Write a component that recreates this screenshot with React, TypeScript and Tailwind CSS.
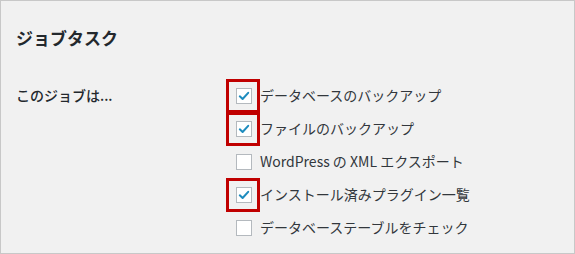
const font = { fontFamily: '"Noto Sans CJK JP", "Noto Sans", sans-serif' };

interface Task {
  label: string;
  checked: boolean;
  marked: boolean;
}

const tasks: Task[] = [
  { label: "データベースのバックアップ", checked: true, marked: true },
  { label: "ファイルのバックアップ", checked: true, marked: true },
  { label: "WordPress の XML エクスポート", checked: false, marked: false },
  { label: "インストール済みプラグイン一覧", checked: true, marked: true },
  { label: "データベーステーブルをチェック", checked: false, marked: false },
];

function Checkbox({ checked, marked }: { checked: boolean; marked: boolean }) {
  return (
    <span className="relative flex h-4 w-4 shrink-0 items-center justify-center">
      <span className="flex h-4 w-4 items-center justify-center border border-[#b4b9be] bg-white">
        {checked && (
          <svg width="14" height="14" viewBox="0 0 16 16" fill="none">
            <path
              d="M3.2 8.4 L6.4 11.4 L12.8 4.4"
              stroke="#1e8cbe"
              strokeWidth="2.3"
              strokeLinecap="round"
              strokeLinejoin="round"
            />
          </svg>
        )}
      </span>
      {/* 赤枠の注釈 */}
      {marked && (
        <span className="pointer-events-none absolute left-[-10px] top-[-9px] h-[34px] w-[34px] border-[3px] border-[#c00000]" />
      )}
    </span>
  );
}

export default function App() {
  return (
    <div
      className="h-[254px] w-[575px] border border-[#c8c8c8] bg-[#f1f1f1] px-[15px] text-[#23282d]"
      style={font}
    >
      <h2 className="pt-[25px] text-[17px] font-bold leading-[24px]">ジョブタスク</h2>

      <div className="mt-[29px] flex">
        <div className="w-[220px] text-[14px] font-medium leading-[33px]">このジョブは...</div>
        <div className="flex flex-col">
          {tasks.map((task) => (
            <label key={task.label} className="flex h-[33px] items-center gap-2 text-[14px]">
              <Checkbox checked={task.checked} marked={task.marked} />
              <span className="leading-[33px] text-[#32373c]">{task.label}</span>
            </label>
          ))}
        </div>
      </div>
    </div>
  );
}
